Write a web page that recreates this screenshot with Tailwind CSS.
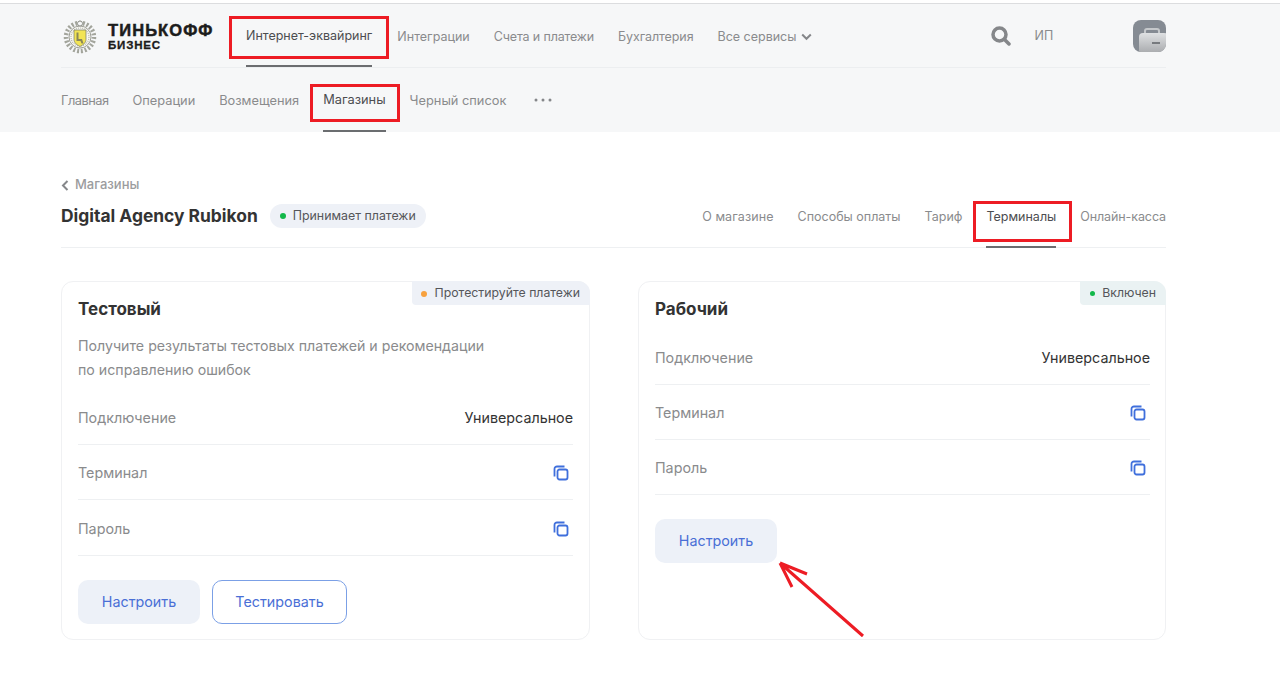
<!DOCTYPE html>
<html lang="ru">
<head>
  <meta charset="UTF-8" />
  <title>Терминалы</title>
  <script src="https://cdn.jsdelivr.net/npm/@tailwindcss/browser@4"></script>
</head>
<body class="relative h-[678px] overflow-hidden bg-white font-['Inter',sans-serif] text-[#333333]">

  <!-- header -->
  <header class="mt-[3px] h-[129px] border-t border-[#dcdddf] bg-[#f6f7f8] px-[61px]">
    <div class="w-[1105px]">
      <div class="flex h-[64px] items-center border-b border-[#eceef0]">
        <div class="flex w-[185px] items-center">
          <svg class="mt-[3px] h-[34px] w-[38px] shrink-0" viewBox="0 0 38 34">
            <circle cx="19" cy="17" r="14" fill="none" stroke="#a3a59c" stroke-width="4.500" stroke-dasharray="2 1.800" />
            <circle cx="19" cy="17" r="11" fill="#f8f8f3" stroke="#86887f" stroke-width="0.800" />
            <circle cx="19" cy="17" r="9" fill="none" stroke="#b5b6ad" stroke-width="1.200" stroke-dasharray="1 1" />
            <path d="M13 10h12v9.500c0 3.500-3 5.500-6 7-3-1.500-6-3.500-6-7z" fill="#f2e455" stroke="#77786c" stroke-width="0.700" />
            <path d="M15.500 12.500h2v6.500h3.500l1.500 4.500h-2l-1-2.500h-4z" fill="#8a8758" />
            <circle cx="19" cy="3.500" r="2.500" fill="#f6f7f8" stroke="#8f918a" stroke-width="1" />
          </svg>
          <div class="ml-[9px] mt-[2px] font-['Liberation_Sans',sans-serif] font-bold text-[#1c1c1c]">
            <div class="text-[16.500px] leading-[16px] tracking-[1.100px] [-webkit-text-stroke:0.5px_#1c1c1c]">ТИНЬКОФФ</div>
            <div class="text-[11.500px] leading-[14px] tracking-[0.8px] [-webkit-text-stroke:0.3px_#1c1c1c]">БИЗНЕС</div>
          </div>
        </div>
        <nav class="flex h-full items-center gap-[24px] pt-[4px] text-[12.500px] text-[#8a8b8d]">
          <a class="flex h-full items-center border-b-2 border-[#6b6d70] text-[#4c4d50]">Интернет-эквайринг</a>
          <a class="ml-[1px]">Интеграции</a>
          <a class="tracking-[-0.15px]">Счета и платежи</a>
          <a class="tracking-[-0.1px]">Бухгалтерия</a>
          <a class="flex items-center gap-[5px]">Все сервисы
            <svg class="-mt-[1px] h-[8px] w-[11px]" viewBox="0 0 11 8"><path d="M1.200 1.500 5.500 5.800 9.800 1.500" fill="none" stroke="#85878a" stroke-width="2" /></svg>
          </a>
        </nav>
        <svg class="ml-[179px] h-[20px] w-[20px]" viewBox="0 0 20 20">
          <circle cx="8.500" cy="8.500" r="6.500" fill="none" stroke="#85878a" stroke-width="3.500" />
          <path d="M13.500 13.500 18 18" stroke="#85878a" stroke-width="3.500" stroke-linecap="round" />
        </svg>
        <span class="ml-[23px] pt-[2px] text-[12.500px] text-[#8a8b8d]">ИП</span>
        <div class="relative ml-auto h-[32px] w-[33px] overflow-hidden rounded-[8px] bg-[#858b93]">
          <div class="absolute left-[11px] top-[8px] h-[8px] w-[16px] rounded-t-[3px] border-2 border-[#c5c8cb]"></div>
          <div class="absolute -bottom-[2px] -right-[2px] h-[21px] w-[29px] rounded-[4px] bg-gradient-to-b from-[#dfe1e3] to-[#a6a8ab]"></div>
          <div class="absolute bottom-[8px] right-[6px] h-[2px] w-[8px] bg-[#777a7e]"></div>
        </div>
      </div>
      <nav class="flex h-[64px] items-center gap-[24px] pt-[2px] text-[12.800px] text-[#8a8b8d]">
        <a class="tracking-[-0.5px]">Главная</a>
        <a>Операции</a>
        <a>Возмещения</a>
        <a class="flex h-full items-center border-b-2 border-[#6b6d70] text-[#4c4d50]">Магазины</a>
        <a>Черный список</a>
        <svg class="-mt-[2px] ml-[4px] h-[4px] w-[18px]" viewBox="0 0 18 4"><circle cx="2" cy="2" r="1.500" fill="#85878a" /><circle cx="9" cy="2" r="1.500" fill="#85878a" /><circle cx="16" cy="2" r="1.500" fill="#85878a" /></svg>
      </nav>
    </div>
  </header>

  <main class="w-[1105px] ml-[61px] mt-[45px]">
    <div class="flex h-[16px] items-center gap-[6px] text-[13px] font-medium text-[#9b9c9e]">
      <svg class="h-[11px] w-[8px]" viewBox="0 0 8 11"><path d="M6.500 1 2 5.500 6.500 10" fill="none" stroke="#85878a" stroke-width="2" /></svg>
      <span>Магазины</span>
    </div>
    <div class="mt-[8px] flex h-[47px] items-start border-b border-[#eef0f2]">
      <div class="flex h-[30px] items-center">
        <h1 class="text-[17.400px] font-bold text-[#333333]">Digital Agency Rubikon</h1>
        <span class="ml-[12px] flex h-[24px] items-center rounded-full bg-[#eef1f7] px-[10px] text-[12.400px] text-[#55565a]">
          <i class="mr-[7px] h-[6px] w-[6px] rounded-full bg-[#12b84a]"></i>Принимает платежи
        </span>
      </div>
      <nav class="ml-auto flex h-[47px] items-start gap-[24px] pt-[7px] text-[12.500px] text-[#8a8b8d]">
        <a class="tracking-[0.1px]">О магазине</a>
        <a>Способы оплаты</a>
        <a>Тариф</a>
        <a class="h-[40px] border-b-2 border-[#6b6d70] text-[#4c4d50]">Терминалы</a>
        <a class="tracking-[-0.1px]">Онлайн-касса</a>
      </nav>
    </div>

    <div class="mt-[33px] grid grid-cols-[529px_528px] gap-[48px]">

      <!-- test card -->
      <section class="relative h-[359px] rounded-xl border border-[#f0f1f3] px-[16px] pt-[15px]">
        <span class="absolute right-[-1px] top-[-1px] flex h-[24px] items-center rounded-tr-xl rounded-bl-[4px] bg-[#eef1f7] pl-[9px] pr-[10px] pt-[1px] text-[12.300px] text-[#55565a]">
          <i class="mr-[8px] h-[6px] w-[6px] rounded-full bg-[#f7a13e]"></i>Протестируйте платежи
        </span>
        <h2 class="text-[17px] font-bold leading-[24px]">Тестовый</h2>
        <p class="mt-[13px] text-[14.200px] leading-[24px] text-[#8a8b8d]">Получите результаты тестовых платежей и рекомендации<br />по исправлению ошибок</p>
        <div class="mt-[8px]">
          <div class="flex h-[55px] items-center justify-between border-b border-[#eef0f2] pt-[2px] text-[14.300px] text-[#8a8b8d]">
            <span>Подключение</span><span class="text-[#333333]">Универсальное</span>
          </div>
          <div class="flex h-[55px] items-center justify-between border-b border-[#eef0f2] pt-[2px] text-[14.300px] text-[#8a8b8d]">
            <span>Терминал</span>
            <svg class="mr-[4px] h-[16px] w-[16px]" viewBox="0 0 16 16" fill="none" stroke="#3f6fdc" stroke-width="1.800"><rect x="4.500" y="4.500" width="10" height="10" rx="2" /><path d="M11.500 1.500H4a2.500 2.500 0 0 0-2.500 2.500v7.500" /></svg>
          </div>
          <div class="flex h-[56px] items-center justify-between border-b border-[#eef0f2] pt-[2px] text-[14.300px] text-[#8a8b8d]">
            <span>Пароль</span>
            <svg class="mr-[4px] h-[16px] w-[16px]" viewBox="0 0 16 16" fill="none" stroke="#3f6fdc" stroke-width="1.800"><rect x="4.500" y="4.500" width="10" height="10" rx="2" /><path d="M11.500 1.500H4a2.500 2.500 0 0 0-2.500 2.500v7.500" /></svg>
          </div>
        </div>
        <div class="mt-[24px] flex gap-[12px]">
          <button class="h-[44px] w-[122px] rounded-[10px] bg-[#edf1f8] text-[14.300px] text-[#4a6fd6]">Настроить</button>
          <button class="h-[44px] w-[135px] rounded-[10px] border border-[#7ba0e6] text-[14.300px] text-[#4a6fd6]">Тестировать</button>
        </div>
      </section>

      <!-- live card -->
      <section class="relative h-[359px] rounded-xl border border-[#f0f1f3] pl-[16px] pr-[15px] pt-[15px]">
        <span class="absolute right-[-1px] top-[-1px] flex h-[24px] items-center rounded-tr-xl rounded-bl-[4px] bg-[#eaf2f3] pl-[10px] pr-[10px] pt-[1px] text-[12.300px] text-[#55565a]">
          <i class="mr-[7px] h-[5px] w-[5px] rounded-full bg-[#12b84a]"></i>Включен
        </span>
        <h2 class="text-[17px] font-bold leading-[24px]">Рабочий</h2>
        <div class="mt-[9px]">
          <div class="flex h-[55px] items-center justify-between border-b border-[#eef0f2] pt-[2px] text-[14.300px] text-[#8a8b8d]">
            <span>Подключение</span><span class="text-[#333333]">Универсальное</span>
          </div>
          <div class="flex h-[55px] items-center justify-between border-b border-[#eef0f2] pt-[2px] text-[14.300px] text-[#8a8b8d]">
            <span>Терминал</span>
            <svg class="mr-[4px] h-[16px] w-[16px]" viewBox="0 0 16 16" fill="none" stroke="#3f6fdc" stroke-width="1.800"><rect x="4.500" y="4.500" width="10" height="10" rx="2" /><path d="M11.500 1.500H4a2.500 2.500 0 0 0-2.500 2.500v7.500" /></svg>
          </div>
          <div class="flex h-[55px] items-center justify-between border-b border-[#eef0f2] pt-[2px] text-[14.300px] text-[#8a8b8d]">
            <span>Пароль</span>
            <svg class="mr-[4px] h-[16px] w-[16px]" viewBox="0 0 16 16" fill="none" stroke="#3f6fdc" stroke-width="1.800"><rect x="4.500" y="4.500" width="10" height="10" rx="2" /><path d="M11.500 1.500H4a2.500 2.500 0 0 0-2.500 2.500v7.500" /></svg>
          </div>
        </div>
        <button class="mt-[24px] h-[44px] w-[122px] rounded-[10px] bg-[#edf1f8] text-[14.300px] text-[#4a6fd6]">Настроить</button>
      </section>
    </div>
  </main>

  <!-- red annotation marks drawn over the screenshot -->
  <div class="absolute left-[229px] top-[16px] h-[43px] w-[160px] border-[3px] border-[#ed1c24]"></div>
  <div class="absolute left-[310px] top-[84px] h-[38px] w-[90px] border-[3px] border-[#ed1c24]"></div>
  <div class="absolute left-[973px] top-[201px] h-[41px] w-[99px] border-[3px] border-[#ed1c24]"></div>
  <svg class="absolute left-[770px] top-[555px] h-[90px] w-[100px]" viewBox="0 0 100 90" fill="none" stroke="#ed1c24" stroke-width="3">
    <path d="M93 81 10 8M10 8 37 19M10 8 22 32" />
  </svg>
</body>
</html>
